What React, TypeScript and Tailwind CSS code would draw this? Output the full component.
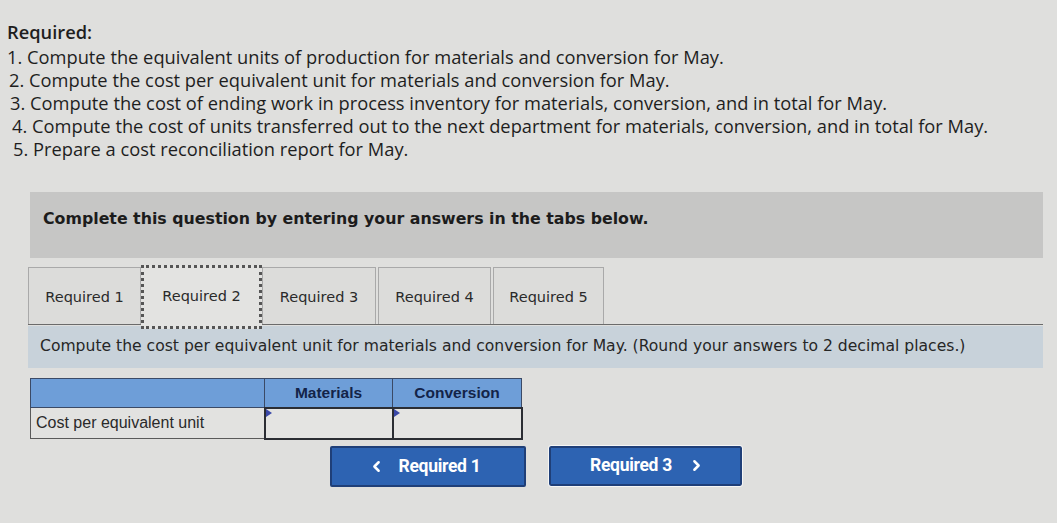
import React from 'react';
import { ChevronLeft, ChevronRight } from 'lucide-react';

const requirements = [
  'Compute the equivalent units of production for materials and conversion for May.',
  'Compute the cost per equivalent unit for materials and conversion for May.',
  'Compute the cost of ending work in process inventory for materials, conversion, and in total for May.',
  'Compute the cost of units transferred out to the next department for materials, conversion, and in total for May.',
  'Prepare a cost reconciliation report for May.',
];

const indents = ['ml-0', 'ml-[2px]', 'ml-[3px]', 'ml-[5px]', 'ml-[6px]'];

const tabs = [
  { label: 'Required 1', cls: 'w-[113px]' },
  { label: 'Required 2', cls: 'w-[121px]', active: true },
  { label: 'Required 3', cls: 'w-[114px]' },
  { label: 'Required 4', cls: 'w-[113px] ml-[2px]' },
  { label: 'Required 5', cls: 'w-[111px] ml-[2px]' },
];

const InputCell: React.FC = () => (
  <td className="relative border-2 border-[#2b2d33] bg-[#e4e4e2] p-0">
    {/* little blue marker in the corner */}
    <span className="absolute left-0 top-0 h-0 w-0 border-y-[4px] border-l-[6px] border-y-transparent border-l-[#3a48a8]" />
  </td>
);

export default function App() {
  return (
    <div className="h-[523px] w-full overflow-hidden bg-[#dfdfdd] font-['Open_Sans',sans-serif] text-[#1e1e1e]">
      {/* Requirements list */}
      <div className="pl-[7px] pt-[20px] text-[18.3px] leading-[23px]">
        <div className="mb-[2px] font-semibold">Required:</div>
        {requirements.map((r, i) => (
          <div key={i} className={indents[i]}>
            {i + 1}. {r}
          </div>
        ))}
      </div>

      {/* Instruction banner */}
      <div className="ml-[30px] mr-[14px] mt-[32px] h-[66px] bg-[#c6c6c5] pl-[13px] pt-[15px] font-['DejaVu_Sans',sans-serif] text-[15.8px] font-bold text-[#1c1c1c]">
        Complete this question by entering your answers in the tabs below.
      </div>

      {/* Tabs */}
      <div className="ml-[28px] mr-[14px] mt-[9px]">
        <div className="relative flex h-[58px] items-stretch border-b border-[#6b6b6b] font-['DejaVu_Sans',sans-serif] text-[14.5px] text-[#2a2a2a]">
          {tabs.map((t) =>
            t.active ? (
              <div
                key={t.label}
                className={`${t.cls} relative z-10 -mb-[5px] -mt-[2px] flex items-center justify-center border-[3px] border-dotted border-[#555] bg-[#e3e3e1]`}
              >
                {t.label}
              </div>
            ) : (
              <div
                key={t.label}
                className={`${t.cls} flex items-center justify-center border border-b-0 border-[#a9a9a9] bg-[#dcdcda] pt-[3px]`}
              >
                {t.label}
              </div>
            )
          )}
        </div>

        <div className="mt-px flex h-[42px] items-center bg-[#c8d2da] pl-[12px] font-['DejaVu_Sans',sans-serif] text-[15.6px] text-[#262626]">
          Compute the cost per equivalent unit for materials and conversion for May. (Round your answers to 2 decimal places.)
        </div>
      </div>

      {/* Answer table */}
      <table className="ml-[30px] mt-[10px] border-collapse font-['Liberation_Sans',Arial,sans-serif] text-[15.5px]">
        <thead>
          <tr className="h-[29px] bg-[#6e9ed8] text-[#132449]">
            <th className="w-[234px] border border-[#3b4a66]" />
            <th className="w-[128px] border border-[#3b4a66] text-center font-bold">Materials</th>
            <th className="w-[129px] border border-[#3b4a66] text-center font-bold">Conversion</th>
          </tr>
        </thead>
        <tbody>
          <tr className="h-[31px]">
            <td className="border border-[#5a5a5a] bg-[#e2e2e0] pl-[5px] text-[16px] text-[#2a2a2a]">Cost per equivalent unit</td>
            <InputCell />
            <InputCell />
          </tr>
        </tbody>
      </table>

      {/* Navigation buttons */}
      <div className="ml-[330px] mt-[6px] flex items-start gap-[23px] font-['Roboto',sans-serif] text-[17.5px] font-bold tracking-[-0.3px] text-white">
        <button className="flex h-[41px] w-[196px] items-center justify-center gap-[14px] rounded-[2px] border-2 border-[#1f3f78] bg-[#2d63b2] pr-[8px]">
          <ChevronLeft size={17} strokeWidth={3.5} />
          <span>Required 1</span>
        </button>
        <button className="flex h-[40px] w-[193px] items-center justify-center gap-[16px] rounded-[2px] border-2 border-[#1f3f78] bg-[#2d63b2] pl-[4px] outline outline-1 outline-white/70">
          <span>Required 3</span>
          <ChevronRight size={17} strokeWidth={3.5} />
        </button>
      </div>
    </div>
  );
}
